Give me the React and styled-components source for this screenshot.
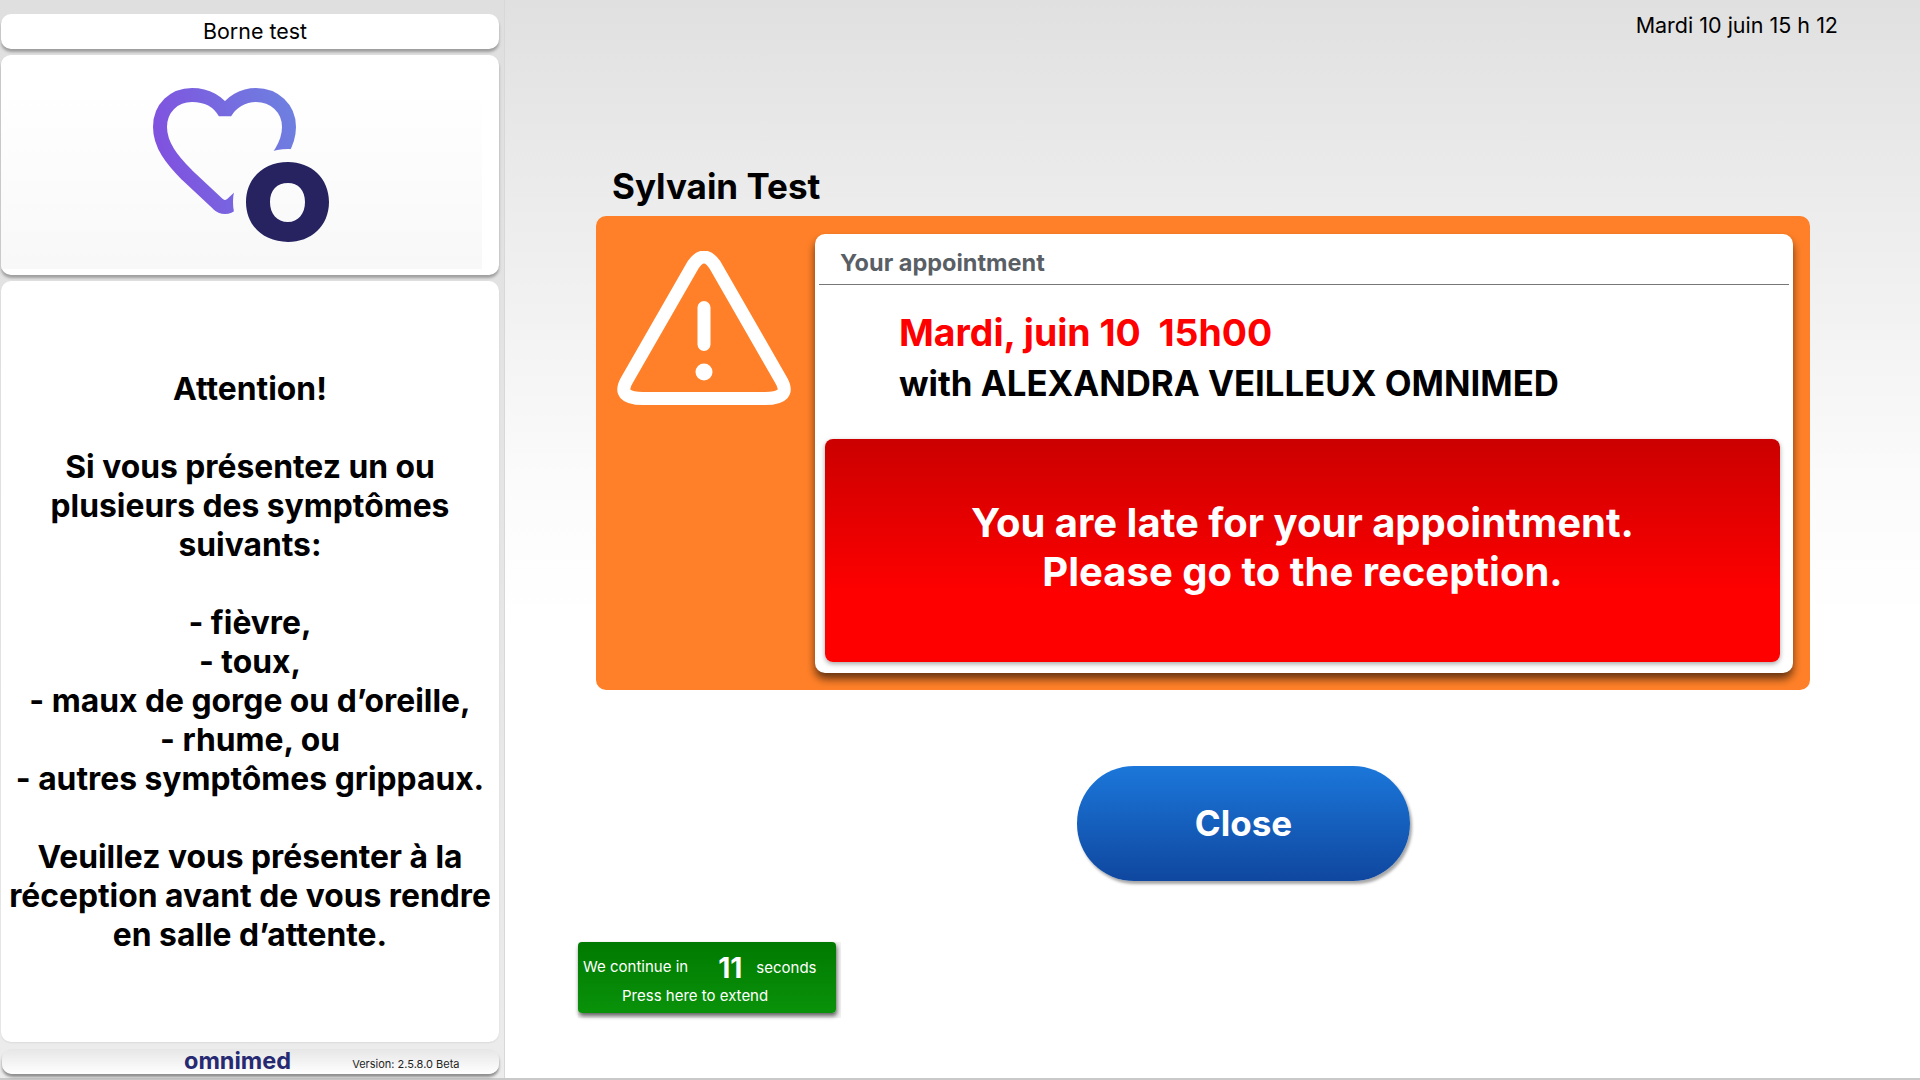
import React from "react";
import styled, { createGlobalStyle } from "styled-components";

const GlobalStyle = createGlobalStyle`
  html, body {
    margin: 0;
    padding: 0;
    width: 1920px;
    height: 1080px;
    overflow: hidden;
    background: #ffffff;
    font-family: Inter, "Liberation Sans", sans-serif;
  }
  * {
    box-sizing: border-box;
  }
`;

const Page = styled.div`
  display: grid;
  grid-template-columns: 505px 1fr;
  width: 1920px;
  height: 1080px;
  border-bottom: 2px solid #c9c9c9;
  background: linear-gradient(to bottom, #e0e0e0 0, #e8e8e8 130px, #fbfbfb 480px, #ffffff 620px);
`;

const Sidebar = styled.aside`
  display: flex;
  flex-direction: column;
  height: 1078px;
  padding: 14px 5px 0 1px;
  border-right: 1px solid #d8d8d8;
  background: linear-gradient(to bottom, #dfdfdf, #ececec);
`;

const Panel = styled.div`
  background: #ffffff;
  border-radius: 10px;
  box-shadow: 0 3px 3px rgba(0, 0, 0, 0.3);
`;

const TitlePanel = styled(Panel)`
  height: 35px;
  line-height: 35px;
  text-align: center;
  font-size: 21.4px;
  color: #000000;
  padding-left: 10px;
`;

const LogoPanel = styled(Panel)`
  height: 220px;
  margin-top: 6px;
  padding-top: 2px;
  overflow: hidden;
`;

const LogoImage = styled.div`
  width: 481px;
  height: 212px;
  background: linear-gradient(to bottom, #ffffff 0, #ffffff 30px, #f8f8f8 100%);
`;

const LogoMark = styled.svg`
  display: block;
  width: 185px;
  height: 160px;
  margin-left: 149px;
  transform: translateY(28px);
`;

const MessagePanel = styled.div`
  flex: 1;
  margin-top: 6px;
  padding: 88px 0 0;
  background: #ffffff;
  border-radius: 10px;
  box-shadow: 0 1px 2px rgba(0, 0, 0, 0.08);
  text-align: center;
  font-size: 31.8px;
  font-weight: 700;
  line-height: 39px;
  color: #000000;
`;

const MessageLine = styled.div`
  min-height: 39px;
  white-space: nowrap;
`;

const FooterPanel = styled.div`
  display: flex;
  align-items: center;
  height: 25px;
  margin: 7px 0 4px 1px;
  border-radius: 10px;
  background: linear-gradient(to bottom, #e6e6e6, #ffffff);
  box-shadow: 0 3px 3px rgba(0, 0, 0, 0.4);
`;

const Brand = styled.span`
  margin: -2px 0 0 182px;
  font-size: 23.5px;
  font-weight: 700;
  color: #272a72;
`;

const Version = styled.span`
  margin: 5px 0 0 61px;
  font-size: 11px;
  color: #1f1f1f;
`;

const Main = styled.main`
  display: flex;
  flex-direction: column;
  align-items: flex-start;
  height: 1078px;
`;

const DateText = styled.div`
  align-self: flex-end;
  margin: 13px 82px 0 0;
  font-size: 21.5px;
  line-height: 25px;
  color: #000000;
`;

const PatientName = styled.h1`
  margin: 127px 0 0 107px;
  font-size: 35px;
  line-height: 42px;
  font-weight: 700;
  color: #000000;
`;

const WarningCard = styled.section`
  display: flex;
  width: 1214px;
  height: 474px;
  margin: 9px 0 0 91px;
  padding: 18px 17px 17px 0;
  background: #ff8028;
  border-radius: 10px;
`;

const WarningSide = styled.div`
  flex: 0 0 219px;
  padding-left: 21px;
`;

const WarningIcon = styled.svg`
  display: block;
  width: 174px;
  height: 156px;
  margin-top: 17px;
`;

const AppointmentPanel = styled.div`
  flex: 1;
  padding: 4px 4px 0;
  background: #ffffff;
  border-radius: 10px;
  box-shadow: 0 6px 8px rgba(0, 0, 0, 0.6);
`;

const PanelHeader = styled.div`
  height: 47px;
  padding: 11px 0 0 21px;
  font-size: 23.5px;
  line-height: 28px;
  font-weight: 700;
  color: #5a5f66;
  border-bottom: 1px solid #777777;
`;

const AppointmentDate = styled.div`
  margin: 23px 0 0 80px;
  font-size: 37.4px;
  line-height: 50px;
  font-weight: 700;
  color: #ff0000;
  white-space: pre;
`;

const AppointmentWith = styled.div`
  margin-left: 80px;
  font-size: 34.8px;
  line-height: 50px;
  font-weight: 700;
  color: #000000;
`;

const LateBanner = styled.div`
  display: flex;
  flex-direction: column;
  align-items: center;
  justify-content: center;
  height: 223px;
  margin: 31px 9px 0 6px;
  padding-bottom: 7px;
  background: linear-gradient(to bottom, #cb0000, #ff0000 70%);
  border-radius: 8px;
  box-shadow: 0 2px 5px rgba(0, 0, 0, 0.35);
  font-size: 40px;
  line-height: 49px;
  font-weight: 700;
  color: #ffffff;
`;

const CloseButton = styled.button`
  width: 333px;
  height: 115px;
  margin: 76px 0 0 572px;
  padding: 0 0 2px;
  border: 0;
  border-radius: 57px / 57px;
  background: linear-gradient(to bottom, #1b77da, #0f479f);
  box-shadow: 2px 3px 3px rgba(0, 0, 0, 0.35);
  font-family: inherit;
  font-size: 35px;
  font-weight: 700;
  color: #ffffff;
`;

const CountdownShade = styled.div`
  margin: 61px 0 0 73px;
  padding: 0 5px 5px 0;
  background: #f3f3f3;
`;

const Countdown = styled.button`
  display: block;
  width: 258px;
  height: 71px;
  padding: 0 0 0 5px;
  border: 0;
  border-radius: 4px;
  background: linear-gradient(to bottom, #007a00, #0a920a);
  box-shadow: 1px 3px 4px rgba(0, 0, 0, 0.6);
  font-family: inherit;
  color: #ffffff;
  text-align: left;
`;

const CountdownRow = styled.div`
  display: flex;
  align-items: center;
  height: 36px;
  font-size: 15px;
`;

const CountdownLabel = styled.span`
  margin-bottom: 4px;
`;

const CountdownNumber = styled.span`
  margin: 0 0 0 30px;
  font-size: 28px;
  font-weight: 700;
`;

const CountdownUnit = styled.span`
  margin: 0 0 2px 14px;
`;

const ExtendLine = styled.div`
  margin-top: 1px;
  padding-left: 39px;
  font-size: 15px;
  line-height: 18px;
`;

const MESSAGE = [
  "Attention!",
  "",
  "Si vous présentez un ou",
  "plusieurs des symptômes",
  "suivants:",
  "",
  "- fièvre,",
  "- toux,",
  "- maux de gorge ou d’oreille,",
  "- rhume, ou",
  "- autres symptômes grippaux.",
  "",
  "Veuillez vous présenter à la",
  "réception avant de vous rendre",
  "en salle d’attente.",
];

const Logo = () => (
  <LogoMark viewBox="150 85 185 160">
    <defs>
      <linearGradient id="heartFill" x1="150" y1="150" x2="300" y2="110" gradientUnits="userSpaceOnUse">
        <stop offset="0" stopColor="#814fdf" />
        <stop offset="1" stopColor="#6d82e0" />
      </linearGradient>
      <mask id="heartCut" maskUnits="userSpaceOnUse" x="150" y="85" width="185" height="160">
        <rect x="150" y="85" width="185" height="160" fill="#ffffff" />
        <ellipse cx="288" cy="202" rx="55" ry="53" fill="#000000" />
      </mask>
    </defs>
    <path
      d="M225 113C231 102 243 95 256 95C274 95 289 108 289 127C289 145 277 160 263 175L232 204C228 208 222 208 218 204L187 175C172 160 160 145 160 127C160 108 174 95 192 95C207 95 219 102 225 113Z"
      fill="none"
      stroke="url(#heartFill)"
      strokeWidth="14"
      strokeLinejoin="bevel"
      mask="url(#heartCut)"
    />
    <path
      fillRule="evenodd"
      fill="#272361"
      d="M246 202C246 178 264 162 288 162C311 162 329 178 329 202C329 226 311 242 288 242C264 242 246 226 246 202ZM270 202C270 214 277 222 288 222C298 222 305 214 305 202C305 190 298 183 288 183C277 183 270 190 270 202Z"
    />
  </LogoMark>
);

const Warning = () => (
  <WarningIcon viewBox="617 251 174 156">
    <path
      d="M693 265Q704 249 715 265L781 380Q792 398.5 765 398.5L643 398.5Q616 398.5 627 380Z"
      fill="none"
      stroke="#ffffff"
      strokeWidth="13"
      strokeLinejoin="round"
    />
    <rect x="697.5" y="301" width="13" height="50" rx="6.5" fill="#ffffff" />
    <circle cx="704" cy="372" r="8.5" fill="#ffffff" />
  </WarningIcon>
);

export default function App() {
  return (
    <>
      <GlobalStyle />
      <Page>
        <Sidebar>
          <TitlePanel>Borne test</TitlePanel>
          <LogoPanel>
            <LogoImage>
              <Logo />
            </LogoImage>
          </LogoPanel>
          <MessagePanel>
            {MESSAGE.map((line, i) => (
              <MessageLine key={i}>{line}</MessageLine>
            ))}
          </MessagePanel>
          <FooterPanel>
            <Brand>omnimed</Brand>
            <Version>Version: 2.5.8.0 Beta</Version>
          </FooterPanel>
        </Sidebar>
        <Main>
          <DateText>Mardi 10 juin 15 h 12</DateText>
          <PatientName>Sylvain Test</PatientName>
          <WarningCard>
            <WarningSide>
              <Warning />
            </WarningSide>
            <AppointmentPanel>
              <PanelHeader>Your appointment</PanelHeader>
              <AppointmentDate>Mardi, juin 10  15h00</AppointmentDate>
              <AppointmentWith>with ALEXANDRA VEILLEUX OMNIMED</AppointmentWith>
              <LateBanner>
                <div>You are late for your appointment.</div>
                <div>Please go to the reception.</div>
              </LateBanner>
            </AppointmentPanel>
          </WarningCard>
          <CloseButton>Close</CloseButton>
          <CountdownShade>
            <Countdown>
              <CountdownRow>
                <CountdownLabel>We continue in</CountdownLabel>
                <CountdownNumber>11</CountdownNumber>
                <CountdownUnit>seconds</CountdownUnit>
              </CountdownRow>
              <ExtendLine>Press here to extend</ExtendLine>
            </Countdown>
          </CountdownShade>
        </Main>
      </Page>
    </>
  );
}
